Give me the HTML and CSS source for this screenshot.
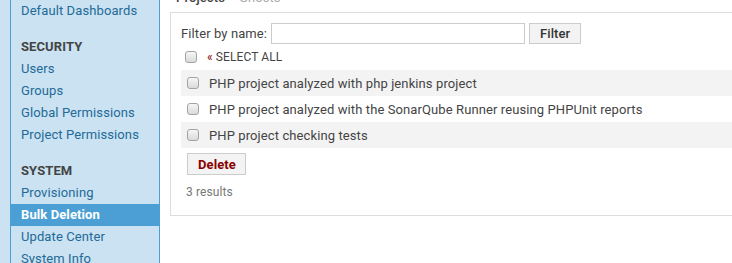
FILE: index.html
```html
<!DOCTYPE html>
<html>
<head>
<meta charset="utf-8">
<link rel="stylesheet" href="styles.css">
</head>
<body>
<div class="page">
  <aside class="sidebar">
    <nav class="nav">
      <ul class="nav-group">
        <li><a class="nav-link" href="#">Default Dashboards</a></li>
      </ul>
      <h3 class="nav-head">SECURITY</h3>
      <ul class="nav-group">
        <li><a class="nav-link" href="#">Users</a></li>
        <li><a class="nav-link" href="#">Groups</a></li>
        <li><a class="nav-link" href="#">Global Permissions</a></li>
        <li><a class="nav-link" href="#">Project Permissions</a></li>
      </ul>
      <h3 class="nav-head">SYSTEM</h3>
      <ul class="nav-group">
        <li><a class="nav-link" href="#">Provisioning</a></li>
        <li><a class="nav-link active" href="#">Bulk Deletion</a></li>
        <li><a class="nav-link" href="#">Update Center</a></li>
        <li><a class="nav-link" href="#">System Info</a></li>
      </ul>
    </nav>
  </aside>
  <main class="main">
    <div class="tabs">
      <span class="tab tab-active">Projects</span>
      <span class="tab">Ghosts</span>
    </div>
    <section class="panel">
      <form class="filter">
        <label class="filter-label">Filter by name:</label>
        <input class="filter-input" type="text">
        <button class="btn btn-filter" type="button">Filter</button>
      </form>
      <div class="select-all">
        <input class="check" type="checkbox">
        <a class="select-link" href="#"><span class="raquo">«</span> SELECT ALL</a>
      </div>
      <ul class="rows">
        <li class="row"><input class="check" type="checkbox"><span>PHP project analyzed with php jenkins project</span></li>
        <li class="row"><input class="check" type="checkbox"><span>PHP project analyzed with the SonarQube Runner reusing PHPUnit reports</span></li>
        <li class="row"><input class="check" type="checkbox"><span>PHP project checking tests</span></li>
      </ul>
      <button class="btn btn-delete" type="button">Delete</button>
      <p class="results">3 results</p>
    </section>
  </main>
</div>
</body>
</html>
```

FILE: styles.css
```css
html, body {
  margin: 0;
  padding: 0;
  background: #fff;
  overflow: hidden;
}
body {
  font-family: Roboto, "Liberation Sans", Arial, sans-serif;
  font-size: 13px;
  letter-spacing: 0.1px;
  color: #444;
  width: 732px;
  height: 263px;
}
.page {
  display: flex;
  align-items: flex-start;
}
.sidebar {
  flex: 0 0 160px;
  box-sizing: border-box;
  padding-left: 10px;
  background: #cae2f2;
  min-height: 300px;
}
.nav {
  border-left: 1px solid #4b9fd5;
  border-right: 1px solid #4b9fd5;
  min-height: 300px;
}
.nav-group {
  list-style: none;
  margin: 0;
  padding: 0;
}
.nav-link {
  display: block;
  height: 22px;
  line-height: 22px;
  padding-left: 10px;
  color: #236a97;
  text-decoration: none;
  white-space: nowrap;
}
.nav-link.active {
  background: #4b9fd5;
  color: #fff;
  font-weight: bold;
}
.nav-head {
  margin: 14px 0 0;
  padding-left: 10px;
  height: 22px;
  line-height: 22px;
  font-size: 13px;
  font-weight: bold;
  color: #444;
}
.main {
  flex: 1;
  min-width: 0;
  padding-left: 10px;
  margin-top: -12px;
}
.tabs {
  display: flex;
  gap: 14px;
  height: 20px;
  line-height: 20px;
  padding-left: 6px;
  margin-bottom: 4px;
}
.tab {
  color: #aaa;
}
.tab-active {
  color: #444;
  font-weight: 500;
}
.panel {
  border: 1px solid #ddd;
  margin-right: -30px;
  padding: 10px 10px 15px 10px;
}
.filter {
  display: flex;
  align-items: center;
  margin: 0;
  height: 21px;
}
.filter-label {
  width: 90px;
  color: #444;
}
.filter-input {
  box-sizing: border-box;
  width: 254px;
  height: 21px;
  border: 1px solid #ccc;
  margin: 0;
  padding: 1px 4px;
  font: inherit;
}
.btn {
  box-sizing: border-box;
  height: 22px;
  border: 1px solid #ccc;
  background: #f3f3f3;
  font-family: inherit;
  font-size: 13px;
  letter-spacing: 0.1px;
  padding: 0 10px;
  margin: 0;
  cursor: pointer;
}
.btn-filter {
  margin-left: 4px;
  width: 52px;
  height: 21px;
  color: #333;
  font-weight: 500;
}
.select-all {
  display: flex;
  align-items: center;
  gap: 10px;
  height: 26px;
  padding-left: 4px;
}
.select-link {
  color: #444;
  text-decoration: none;
  font-size: 12px;
}
.raquo {
  color: #8b0000;
  font-size: 12px;
}
.check {
  appearance: none;
  -webkit-appearance: none;
  box-sizing: border-box;
  width: 12px;
  height: 12px;
  margin: 0;
  border: 1px solid #a3a3a3;
  border-radius: 3px;
  background: linear-gradient(#f6f6f6, #dadada);
  flex: 0 0 auto;
}
.rows {
  list-style: none;
  margin: 0;
  padding: 0;
}
.row {
  display: flex;
  align-items: center;
  gap: 10px;
  height: 26px;
  padding-left: 6px;
  color: #444;
}
.row:nth-child(odd) {
  background: #f3f3f3;
}
.btn-delete {
  margin: 5px 0 0 6px;
  width: 59px;
  color: #8b0000;
  font-weight: bold;
}
.results {
  margin: 9px 0 0 5px;
  font-size: 12px;
  line-height: 16px;
  color: #777;
}
```
